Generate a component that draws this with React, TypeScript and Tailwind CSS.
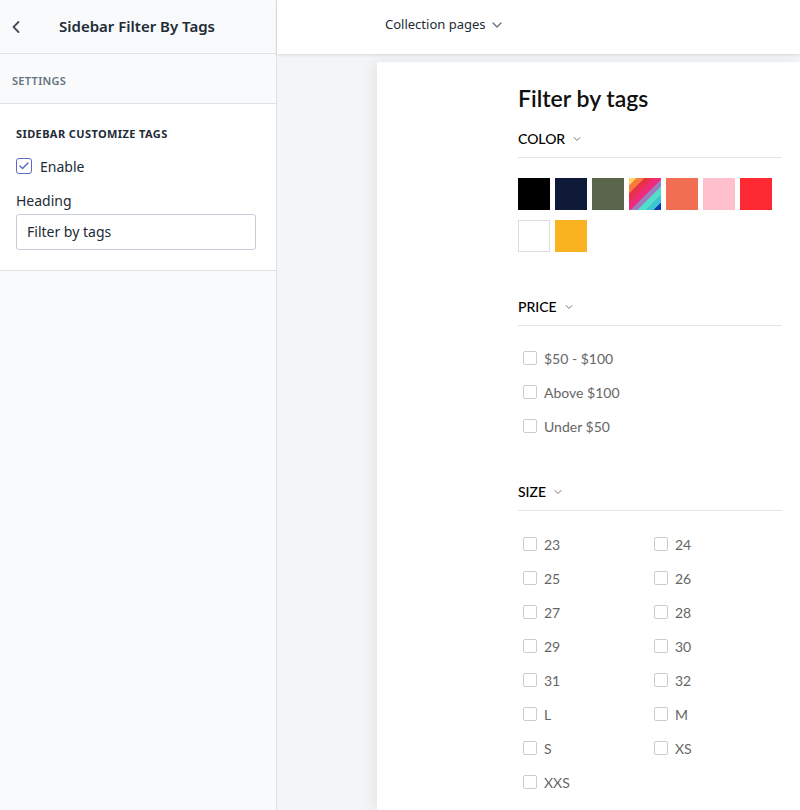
import React from "react";
import { ChevronLeft, ChevronDown, Check } from "lucide-react";

const swatches = [
  "bg-[#000000]",
  "bg-[#0f1a38]",
  "bg-[#5a654b]",
  "bg-[linear-gradient(135deg,#fdd36a_0%,#fdd36a_12%,#f97b3c_12%,#f97b3c_24%,#e8304a_24%,#e8304a_38%,#ee2a7b_38%,#ee2a7b_52%,#9c7ec0_52%,#9c7ec0_64%,#4fe0c7_64%,#4fe0c7_76%,#3ec3d5_76%,#3ec3d5_88%,#0b3ea8_88%)]",
  "bg-[#f26e52]",
  "bg-[#ffbfcc]",
  "bg-[#fd2a33]",
  "bg-white border border-[#dddddd]",
  "bg-[#f9b321]",
];

const prices = ["$50 - $100", "Above $100", "Under $50"];
const sizes = ["23", "24", "25", "26", "27", "28", "29", "30", "31", "32", "L", "M", "S", "XS", "XXS"];

const FilterItem = ({ label }: { label: string }) => (
  <li className="flex items-center h-[34px] pl-[5px]">
    <span className="w-[14px] h-[14px] border border-[#cccccc] rounded-[2px] bg-white" />
    <span className="ml-[7px] text-[14px] text-[#666666]">{label}</span>
  </li>
);

const GroupTitle = ({ label }: { label: string }) => (
  <div className="flex items-center gap-[6px] h-[38px] border-b border-[#e5e5e5] text-[14px] font-medium text-black">
    {label}
    <ChevronDown className="w-3 h-3 text-[#777]" strokeWidth={2} />
  </div>
);

export default function App() {
  return (
    <div className="flex w-[800px] h-[810px] overflow-hidden bg-[#f4f5f7] font-['Noto_Sans',sans-serif]">
      {/* sidebar */}
      <aside className="w-[277px] shrink-0 flex flex-col bg-[#f9fafb] border-r border-[#dfe3e8]">
        <div className="h-[54px] shrink-0 flex items-center border-b border-[#dfe3e8]">
          <ChevronLeft className="w-5 h-5 ml-[6px] text-[#454f5b]" strokeWidth={2.2} />
          <h1 className="ml-[33px] text-[15px] font-semibold text-[#212b36]">Sidebar Filter By Tags</h1>
        </div>
        <div className="h-[50px] shrink-0 px-3 pt-[19px] border-b border-[#dfe3e8] text-[11px] font-semibold tracking-[0.3px] text-[#637381]">
          SETTINGS
        </div>
        <div className="bg-white border-b border-[#dfe3e8] px-4 pt-[22px] pb-[20px]">
          <div className="text-[11px] font-bold tracking-[0.4px] text-[#212b36]">SIDEBAR CUSTOMIZE TAGS</div>
          <label className="flex items-center mt-[13px]">
            <span className="w-4 h-4 rounded-[3px] border border-[#5c6ac4] flex items-center justify-center bg-white">
              <Check className="w-3 h-3 text-[#5c6ac4]" strokeWidth={3} />
            </span>
            <span className="ml-2 text-[14px] text-[#212b36]">Enable</span>
          </label>
          <div className="mt-[13px] text-[14px] text-[#212b36]">Heading</div>
          <div className="mt-[3px] h-9 w-[240px] flex items-center px-[10px] border border-[#c4cdd5] rounded-[3px] text-[14px] text-[#212b36]">
            Filter by tags
          </div>
        </div>
      </aside>

      {/* preview */}
      <main className="flex-1 flex flex-col min-w-0">
        <div className="h-[54px] shrink-0 bg-white flex items-center pl-[108px] pb-[4px] shadow-[0_1px_3px_rgba(0,0,0,0.12)] z-10">
          <span className="text-[13px] text-[#212b36]">Collection pages</span>
          <ChevronDown className="w-4 h-4 ml-[3px] text-[#637381]" strokeWidth={2} />
        </div>
        <div className="flex-1 flex pt-[8px] pl-[100px] min-h-0">
          <div className="flex-1 bg-white shadow-[-4px_0_14px_rgba(0,0,0,0.07)] pl-[141px] pr-[18px] pt-[22px] font-['Lato',sans-serif]">
            <h2 className="text-[23px] font-semibold text-[#111] leading-[28px]">Filter by tags</h2>
            <div className="mt-[8px]">
              <GroupTitle label="COLOR" />
              <div className="flex flex-wrap gap-x-[5px] gap-y-[10px] mt-[20px] w-[260px]">
                {swatches.map((s, i) => (
                  <span key={i} className={`w-8 h-8 ${s}`} />
                ))}
              </div>
            </div>
            <div className="mt-[36px]">
              <GroupTitle label="PRICE" />
              <ul className="mt-[15px]">
                {prices.map((p) => (
                  <FilterItem key={p} label={p} />
                ))}
              </ul>
            </div>
            <div className="mt-[30px]">
              <GroupTitle label="SIZE" />
              <ul className="mt-[16px] grid grid-cols-[131px_131px]">
                {sizes.map((s) => (
                  <FilterItem key={s} label={s} />
                ))}
              </ul>
            </div>
          </div>
        </div>
      </main>
    </div>
  );
}
